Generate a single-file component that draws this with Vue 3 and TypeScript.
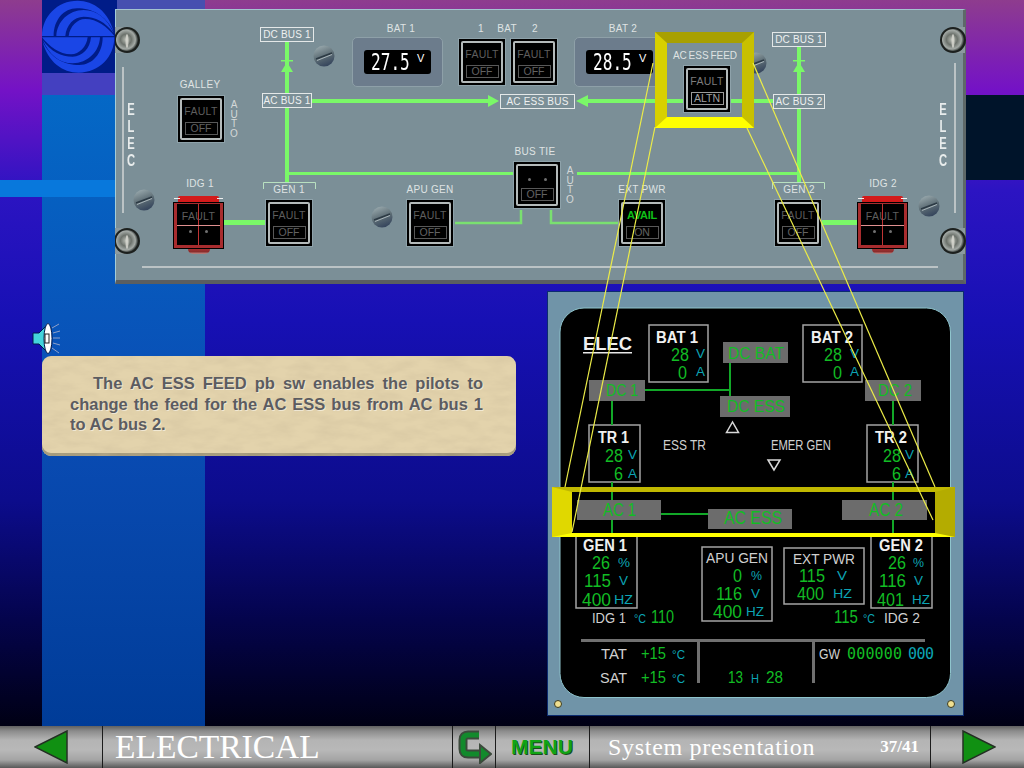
<script setup lang="ts">
interface Pb {
  x: number;
  y: number;
  top?: string;
  box: string;
  dots?: boolean;
  lit?: boolean;
  avail?: boolean;
}

interface Label {
  x: number;
  y: number;
  w: number;
  text: string;
  cls?: string;
}

interface Txt {
  t: string;
  x: number;
  y: number;
  w: number;
  s: number;
  c: string;
}

// panel coords are page coords minus the panel's padding box origin
const PX = 116;
const PY = 10;

const at = (x: number, y: number, w?: number) => ({
  left: `${x - PX}px`,
  top: `${y - PY}px`,
  width: w === undefined ? undefined : `${w}px`
});

const pbs: Pb[] = [
  { x: 177, y: 95, top: 'FAULT', box: 'OFF' },
  { x: 265, y: 199, top: 'FAULT', box: 'OFF' },
  { x: 406, y: 199, top: 'FAULT', box: 'OFF' },
  { x: 458, y: 38, top: 'FAULT', box: 'OFF' },
  { x: 510, y: 38, top: 'FAULT', box: 'OFF' },
  { x: 513, y: 161, box: 'OFF', dots: true },
  { x: 618, y: 199, top: 'AVAIL', box: 'ON', avail: true },
  { x: 683, y: 65, top: 'FAULT', box: 'ALTN', lit: true },
  { x: 774, y: 199, top: 'FAULT', box: 'OFF' }
];

const guards = [{ x: 174 }, { x: 858 }];

const labels: Label[] = [
  { x: 160, y: 79, w: 80, text: 'GALLEY' },
  { x: 160, y: 178, w: 80, text: 'IDG 1' },
  { x: 843, y: 178, w: 80, text: 'IDG 2' },
  { x: 249, y: 184, w: 80, text: 'GEN 1' },
  { x: 759, y: 184, w: 80, text: 'GEN 2' },
  { x: 390, y: 184, w: 80, text: 'APU GEN' },
  { x: 602, y: 184, w: 80, text: 'EXT PWR' },
  { x: 495, y: 146, w: 80, text: 'BUS TIE' },
  { x: 361, y: 23, w: 80, text: 'BAT 1' },
  { x: 583, y: 23, w: 80, text: 'BAT 2' },
  { x: 471, y: 23, w: 20, text: '1' },
  { x: 487, y: 23, w: 40, text: 'BAT' },
  { x: 525, y: 23, w: 20, text: '2' },
  { x: 665, y: 50, w: 80, text: 'AC ESS FEED', cls: 'tight' }
];

const busBoxes: Label[] = [
  { x: 260, y: 27, w: 54, text: 'DC BUS 1' },
  { x: 262, y: 93, w: 50, text: 'AC BUS 1' },
  { x: 500, y: 94, w: 75, text: 'AC ESS BUS' },
  { x: 772, y: 32, w: 54, text: 'DC BUS 1' },
  { x: 773, y: 94, w: 52, text: 'AC BUS 2' }
];

const lcds = [
  { x: 352, value: '27.5' },
  { x: 574, value: '28.5' }
];

const autos = [
  { x: 227, y: 100 },
  { x: 563, y: 166 }
];

const bigScrews = [
  [127, 40],
  [127, 241],
  [953, 40],
  [953, 241]
];

const smallScrews = [
  [144, 200],
  [324, 56],
  [382, 217],
  [756, 63],
  [929, 206]
];

const ecamBoxes = [
  [649, 325, 59, 57],
  [803, 325, 59, 57],
  [589, 425, 51, 57],
  [867, 425, 51, 57],
  [576, 534, 61, 74],
  [871, 534, 61, 74],
  [702, 547, 70, 74],
  [784, 548, 80, 56]
];

const busBars = [
  { x: 723, y: 342, w: 65, h: 21, t: 'DC BAT', tx: 728, tw: 56, ty: 359, s: 17 },
  { x: 589, y: 380, w: 56, h: 21, t: 'DC 1', tx: 606, tw: 32, ty: 396, s: 17 },
  { x: 865, y: 380, w: 56, h: 21, t: 'DC 2', tx: 878, tw: 34, ty: 396, s: 17 },
  { x: 720, y: 396, w: 70, h: 21, t: 'DC ESS', tx: 727, tw: 58, ty: 412, s: 17 },
  { x: 577, y: 500, w: 84, h: 20, t: 'AC 1', tx: 603, tw: 33, ty: 516, s: 18 },
  { x: 842, y: 500, w: 85, h: 20, t: 'AC 2', tx: 869, tw: 34, ty: 516, s: 18 },
  { x: 708, y: 509, w: 84, h: 20, t: 'AC ESS', tx: 724, tw: 58, ty: 524, s: 18 }
];

const ecamLines = [
  [645, 390, 730, 390],
  [730, 363, 730, 396],
  [612, 401, 612, 425],
  [612, 482, 612, 500],
  [612, 520, 612, 537],
  [893, 401, 893, 425],
  [893, 482, 893, 500],
  [893, 520, 893, 537],
  [661, 514, 708, 514]
];

const ecamTexts: Txt[] = [
  { t: 'BAT 1', x: 656, y: 343, w: 42, s: 16, c: 'wb' },
  { t: '28', x: 671, y: 361, w: 18, s: 18, c: 'g' },
  { t: 'V', x: 696, y: 358, w: 9, s: 13, c: 'c' },
  { t: '0', x: 678, y: 379, w: 9, s: 18, c: 'g' },
  { t: 'A', x: 696, y: 376, w: 9, s: 13, c: 'c' },
  { t: 'BAT 2', x: 811, y: 343, w: 42, s: 16, c: 'wb' },
  { t: '28', x: 824, y: 361, w: 18, s: 18, c: 'g' },
  { t: 'V', x: 850, y: 358, w: 9, s: 13, c: 'c' },
  { t: '0', x: 833, y: 379, w: 9, s: 18, c: 'g' },
  { t: 'A', x: 850, y: 376, w: 9, s: 13, c: 'c' },
  { t: 'TR 1', x: 598, y: 443, w: 31, s: 16, c: 'wb' },
  { t: '28', x: 605, y: 462, w: 18, s: 18, c: 'g' },
  { t: 'V', x: 628, y: 459, w: 9, s: 13, c: 'c' },
  { t: '6', x: 614, y: 480, w: 9, s: 18, c: 'g' },
  { t: 'A', x: 628, y: 478, w: 9, s: 13, c: 'c' },
  { t: 'TR 2', x: 875, y: 443, w: 32, s: 16, c: 'wb' },
  { t: '28', x: 883, y: 462, w: 18, s: 18, c: 'g' },
  { t: 'V', x: 905, y: 459, w: 9, s: 13, c: 'c' },
  { t: '6', x: 892, y: 480, w: 9, s: 18, c: 'g' },
  { t: 'A', x: 905, y: 478, w: 9, s: 13, c: 'c' },
  { t: 'ESS TR', x: 663, y: 450, w: 43, s: 14, c: 'w' },
  { t: 'EMER GEN', x: 771, y: 450, w: 60, s: 14, c: 'w' },
  { t: 'GEN 1', x: 583, y: 551, w: 44, s: 16, c: 'wb' },
  { t: '26', x: 592, y: 569, w: 18, s: 18, c: 'g' },
  { t: '%', x: 618, y: 567, w: 12, s: 13, c: 'c' },
  { t: '115', x: 584, y: 587, w: 27, s: 18, c: 'g' },
  { t: 'V', x: 619, y: 585, w: 9, s: 13, c: 'c' },
  { t: '400', x: 582, y: 606, w: 29, s: 18, c: 'g' },
  { t: 'HZ', x: 614, y: 604, w: 19, s: 13, c: 'c' },
  { t: 'APU GEN', x: 706, y: 563, w: 62, s: 15, c: 'w' },
  { t: '0', x: 733, y: 582, w: 9, s: 18, c: 'g' },
  { t: '%', x: 751, y: 580, w: 11, s: 13, c: 'c' },
  { t: '116', x: 716, y: 600, w: 26, s: 18, c: 'g' },
  { t: 'V', x: 751, y: 598, w: 9, s: 13, c: 'c' },
  { t: '400', x: 713, y: 618, w: 29, s: 18, c: 'g' },
  { t: 'HZ', x: 746, y: 616, w: 18, s: 13, c: 'c' },
  { t: 'EXT PWR', x: 793, y: 564, w: 62, s: 15, c: 'w' },
  { t: '115', x: 799, y: 582, w: 26, s: 18, c: 'g' },
  { t: 'V', x: 837, y: 580, w: 10, s: 13, c: 'c' },
  { t: '400', x: 797, y: 600, w: 27, s: 18, c: 'g' },
  { t: 'HZ', x: 833, y: 598, w: 19, s: 13, c: 'c' },
  { t: 'GEN 2', x: 879, y: 551, w: 44, s: 16, c: 'wb' },
  { t: '26', x: 888, y: 569, w: 18, s: 18, c: 'g' },
  { t: '%', x: 913, y: 567, w: 11, s: 13, c: 'c' },
  { t: '116', x: 879, y: 587, w: 27, s: 18, c: 'g' },
  { t: 'V', x: 914, y: 585, w: 9, s: 13, c: 'c' },
  { t: '401', x: 877, y: 606, w: 27, s: 18, c: 'g' },
  { t: 'HZ', x: 912, y: 604, w: 18, s: 13, c: 'c' },
  { t: 'IDG 1', x: 592, y: 623, w: 34, s: 15, c: 'w' },
  { t: '°C', x: 634, y: 623, w: 12, s: 12, c: 'c' },
  { t: '110', x: 651, y: 623, w: 23, s: 18, c: 'g' },
  { t: '115', x: 834, y: 623, w: 24, s: 18, c: 'g' },
  { t: '°C', x: 863, y: 623, w: 12, s: 12, c: 'c' },
  { t: 'IDG 2', x: 884, y: 623, w: 36, s: 15, c: 'w' },
  { t: 'TAT', x: 601, y: 659, w: 26, s: 15, c: 'w' },
  { t: '+15', x: 641, y: 659, w: 25, s: 17, c: 'g' },
  { t: '°C', x: 672, y: 659, w: 13, s: 12, c: 'c' },
  { t: 'SAT', x: 600, y: 683, w: 27, s: 15, c: 'w' },
  { t: '+15', x: 641, y: 683, w: 25, s: 17, c: 'g' },
  { t: '°C', x: 672, y: 683, w: 13, s: 12, c: 'c' },
  { t: '13', x: 728, y: 683, w: 15, s: 17, c: 'g' },
  { t: 'H', x: 751, y: 683, w: 8, s: 13, c: 'c' },
  { t: '28', x: 766, y: 683, w: 17, s: 17, c: 'g' },
  { t: 'GW', x: 819, y: 659, w: 21, s: 14, c: 'w' }
];

const yellowLines = [
  [653, 63, 565, 487],
  [655, 127, 572, 532],
  [753, 63, 935, 487],
  [747, 128, 933, 520]
];
</script>

<template>
  <div class="page">
    <main class="slide">
      <div class="band band-column"></div>
      <div class="band band-step"></div>
      <div class="band band-top"></div>
      <div class="band band-cross"></div>
      <div class="band band-dark"></div>

      <svg class="logo" viewBox="0 0 225 219" width="75" height="73">
        <rect width="225" height="219" fill="#001c88" />
        <g id="swirl" fill="#1a46e6">
          <g>
            <path d="M0 108 C0 50 45 2 107 2 C155 2 200 35 215 95 C190 45 150 25 105 25 C65 25 35 60 35 108 Z" />
            <path d="M43 108 C45 65 80 30 125 30 C165 30 195 55 215 100 C190 65 160 50 125 50 C95 50 73 75 70 108 Z" />
            <path d="M80 108 C83 80 105 57 130 57 C165 57 195 80 217 108 Z" />
          </g>
          <g transform="rotate(180 108.5 110)">
            <path d="M0 108 C0 50 45 2 107 2 C155 2 200 35 215 95 C190 45 150 25 105 25 C65 25 35 60 35 108 Z" />
            <path d="M43 108 C45 65 80 30 125 30 C165 30 195 55 215 100 C190 65 160 50 125 50 C95 50 73 75 70 108 Z" />
            <path d="M80 108 C83 80 105 57 130 57 C165 57 195 80 217 108 Z" />
          </g>
        </g>
      </svg>

      <section class="panel">
        <svg class="panel-art" viewBox="115 9 851 275" width="851" height="275">
          <defs>
            <radialGradient id="bigScrew" cx="45%" cy="48%" r="55%">
              <stop offset="0" stop-color="#b8bcb4" />
              <stop offset="0.45" stop-color="#6c726c" />
              <stop offset="0.78" stop-color="#a4aaa6" />
              <stop offset="1" stop-color="#2c3230" />
            </radialGradient>
            <linearGradient id="smallScrew" x1="0.2" y1="0" x2="0.6" y2="1">
              <stop offset="0" stop-color="#9cacb0" />
              <stop offset="0.55" stop-color="#5c6c74" />
              <stop offset="1" stop-color="#34445c" />
            </linearGradient>
          </defs>

          <g fill="#7af868">
            <rect x="285" y="41" width="4" height="142" />
            <rect x="797" y="45" width="4" height="138" />
            <rect x="312" y="99" width="180" height="4" />
            <rect x="586" y="99" width="187" height="4" />
            <rect x="289" y="172" width="224" height="3" />
            <rect x="577" y="172" width="220" height="3" />
            <rect x="223" y="220" width="42" height="5" />
            <rect x="822" y="220" width="36" height="5" />
            <polygon points="281,72 287,62 293,72" />
            <rect x="281" y="60" width="12" height="1.5" />
            <polygon points="793,72 799,62 805,72" />
            <rect x="793" y="60" width="12" height="1.5" />
            <polygon points="499,101 488,95 488,107" />
            <polygon points="576,101 588,95 588,107" />
          </g>
          <g fill="none" stroke="#7ae070" stroke-width="2.5">
            <path d="M455 223 H521 V210" />
            <path d="M551 210 V223 H618" />
          </g>
          <g fill="none" stroke="#b8e0c0" stroke-width="1">
            <path d="M263.5 189 V182.5 H315.5 V189" />
            <path d="M772.5 189 V182.5 H824.5 V189" />
          </g>

          <g stroke="#d0d4d4" stroke-width="1.5">
            <line x1="123" y1="67" x2="123" y2="213" />
            <line x1="955" y1="63" x2="955" y2="213" />
            <line x1="142" y1="267" x2="938" y2="267" />
          </g>

          <g v-for="(s, i) in bigScrews" :key="'b' + i">
            <rect
              :x="s[0] < 500 ? s[0] - 12 : s[0]"
              :y="s[1] - 13"
              width="12"
              height="26"
              fill="#8c9a9e"
            />
            <circle :cx="s[0]" :cy="s[1]" r="13" fill="#1c201e" />
            <circle :cx="s[0]" :cy="s[1]" r="11" fill="url(#bigScrew)" />
            <ellipse :cx="s[0]" :cy="s[1] + 1" rx="1.5" ry="7" fill="#dcdcd4" opacity="0.8" />
          </g>
          <g v-for="(s, i) in smallScrews" :key="'s' + i">
            <circle :cx="s[0]" :cy="s[1]" r="10.5" fill="url(#smallScrew)" />
            <line
              :x1="s[0] - 8"
              :y1="s[1] + 3"
              :x2="s[0] + 8"
              :y2="s[1] - 3"
              stroke="#2c3a44"
              stroke-width="1.5"
            />
            <line
              :x1="s[0] - 7"
              :y1="s[1] + 4.5"
              :x2="s[0] + 8"
              :y2="s[1] - 1.5"
              stroke="#a8b4b8"
              stroke-width="1"
            />
          </g>
        </svg>

        <div class="elec" :style="at(124, 101)">
          <span>E</span><span>L</span><span>E</span><span>C</span>
        </div>
        <div class="elec" :style="at(936, 101)">
          <span>E</span><span>L</span><span>E</span><span>C</span>
        </div>

        <div v-for="a in autos" :key="a.x" class="auto" :style="at(a.x, a.y)">
          <span>A</span><span>U</span><span>T</span><span>O</span>
        </div>

        <div
          v-for="l in labels"
          :key="l.x + l.text"
          class="plate-label"
          :class="l.cls"
          :style="at(l.x, l.y, l.w)"
        >
          {{ l.text }}
        </div>

        <div v-for="b in busBoxes" :key="b.x + b.text" class="bus-box" :style="at(b.x, b.y, b.w)">
          {{ b.text }}
        </div>

        <div v-for="d in lcds" :key="d.x" class="bat-plate" :style="at(d.x, 37)">
          <div class="lcd">
            <span class="lcd-value">{{ d.value }}</span>
            <span class="lcd-unit">V</span>
          </div>
        </div>

        <div v-for="p in pbs" :key="p.x" class="pb" :class="{ lit: p.lit }" :style="at(p.x, p.y)">
          <div class="pb-inner">
            <div v-if="p.dots" class="pb-dots"><i></i><i></i></div>
            <div v-else class="pb-top" :class="{ avail: p.avail }">{{ p.top }}</div>
            <div class="pb-box">{{ p.box }}</div>
          </div>
        </div>

        <div v-for="g in guards" :key="g.x" class="guard" :style="at(g.x, 196)">
          <div class="guard-lid"></div>
          <div class="guard-body">
            <div class="pb-top">FAULT</div>
            <div class="pb-dots"><i></i><i></i></div>
            <span class="guard-v"></span>
            <span class="guard-h"></span>
          </div>
          <div class="guard-tab"></div>
          <span class="guard-pin pin-left"></span>
          <span class="guard-pin pin-right"></span>
        </div>

        <div class="frame" :style="at(655, 32)"></div>
      </section>

      <div class="lower">
        <div class="note-col">
          <svg class="speaker" viewBox="0 0 30 34" width="30" height="34">
            <g stroke="#8fa0c8" stroke-width="1">
              <line x1="20" y1="6" x2="27" y2="2" />
              <line x1="21" y1="11" x2="28" y2="9" />
              <line x1="21" y1="16" x2="28" y2="16" />
              <line x1="21" y1="21" x2="28" y2="23" />
              <line x1="20" y1="26" x2="27" y2="31" />
            </g>
            <polygon points="1,11 7,11 16,2 16,31 7,22 1,22" fill="#44d4dc" stroke="#00184c" />
            <ellipse cx="16" cy="16.5" rx="4" ry="15" fill="#fff" stroke="#00184c" />
            <rect x="13" y="12" width="4" height="9" fill="none" stroke="#222" />
          </svg>

          <div class="note">
            <svg class="note-grain" width="474" height="100">
              <filter id="grain">
                <feTurbulence type="fractalNoise" baseFrequency="0.04 0.11" numOctaves="4" seed="7" />
                <feColorMatrix
                  values="0 0 0 0 0.6  0 0 0 0 0.5  0 0 0 0 0.32  0.7 0 0 0 -0.24"
                />
              </filter>
              <rect width="474" height="97" filter="url(#grain)" />
            </svg>
            <p class="note-text">
              The AC ESS FEED pb sw enables the pilots to change the feed for the AC ESS bus from AC bus 1 to AC bus 2.
            </p>
          </div>
        </div>

        <section class="ecam">
          <svg viewBox="547 291 417 425" width="417" height="425">
            <rect x="560" y="308" width="390.5" height="389.5" rx="24" fill="#000" stroke="#8fc4cc" stroke-width="1" />
            <circle cx="558" cy="704" r="3.5" fill="#f0e090" stroke="#3a3a20" />
            <circle cx="951" cy="704" r="3.5" fill="#f0e090" stroke="#3a3a20" />

            <rect
              v-for="(b, i) in ecamBoxes"
              :key="'eb' + i"
              :x="b[0]"
              :y="b[1]"
              :width="b[2]"
              :height="b[3]"
              fill="none"
              stroke="#a4a4a4"
              stroke-width="1.5"
            />

            <line
              v-for="(l, i) in ecamLines"
              :key="'el' + i"
              :x1="l[0]"
              :y1="l[1]"
              :x2="l[2]"
              :y2="l[3]"
              stroke="#12a828"
              stroke-width="2"
            />

            <g v-for="b in busBars" :key="b.t">
              <rect :x="b.x" :y="b.y" :width="b.w" :height="b.h" fill="#6c6c6c" />
              <text
                class="g"
                :x="b.tx"
                :y="b.ty"
                :font-size="b.s"
                :textLength="b.tw"
                lengthAdjust="spacingAndGlyphs"
              >{{ b.t }}</text>
            </g>

            <text class="wb" x="583" y="350" font-size="19" textLength="49" lengthAdjust="spacingAndGlyphs">ELEC</text>
            <rect x="583" y="352" width="49" height="1.5" fill="#e8e8e8" />

            <polygon points="732.5,422 726.5,432.5 738.5,432.5" fill="none" stroke="#d8d8d8" stroke-width="1.5" />
            <polygon points="774,470 768,460 780,460" fill="none" stroke="#d8d8d8" stroke-width="1.5" />

            <text
              v-for="(t, i) in ecamTexts"
              :key="'et' + i"
              :class="t.c"
              :x="t.x"
              :y="t.y"
              :font-size="t.s"
              :textLength="t.w"
              lengthAdjust="spacingAndGlyphs"
            >{{ t.t }}</text>

            <g fill="#707070">
              <rect x="581" y="639" width="344" height="3" />
              <rect x="697" y="640" width="3" height="43" />
              <rect x="812" y="640" width="3" height="43" />
            </g>

            <text class="g mono" x="847" y="659" font-size="15" textLength="55" lengthAdjust="spacing">000000</text>
            <text class="c mono" x="908" y="659" font-size="15" textLength="26" lengthAdjust="spacing">000</text>
          </svg>
          <div class="band-frame"></div>
        </section>
      </div>

      <svg class="links" viewBox="0 0 1024 726" width="1024" height="726">
        <line
          v-for="(l, i) in yellowLines"
          :key="i"
          :x1="l[0]"
          :y1="l[1]"
          :x2="l[2]"
          :y2="l[3]"
          stroke="#ecec48"
          stroke-width="1.2"
        />
      </svg>
    </main>

    <nav class="nav">
      <div class="cell cell-back">
        <svg viewBox="0 0 34 34" width="34" height="34">
          <polygon points="1,17 33,1 33,33" fill="#109012" stroke="#243024" stroke-width="1.5" />
        </svg>
      </div>
      <div class="cell cell-chapter">ELECTRICAL</div>
      <div class="cell cell-return">
        <svg viewBox="0 0 34 34" width="34" height="34">
          <path d="M21 5 H10 Q5 5 5 10 V19 Q5 24 10 24 H24" fill="none" stroke="#3c4a3c" stroke-width="9" />
          <path d="M21 5 H10 Q5 5 5 10 V19 Q5 24 10 24 H24" fill="none" stroke="#128a2c" stroke-width="5" />
          <polygon points="22,15 33,24 22,33" fill="#128a2c" stroke="#3c4a3c" stroke-width="2" />
        </svg>
      </div>
      <div class="cell cell-menu">MENU</div>
      <div class="cell cell-topic">
        <span>System presentation</span>
        <span class="count">37/41</span>
      </div>
      <div class="cell cell-next">
        <svg viewBox="0 0 34 34" width="34" height="34">
          <polygon points="33,17 1,1 1,33" fill="#109012" stroke="#243024" stroke-width="1.5" />
        </svg>
      </div>
    </nav>
  </div>
</template>

<style>
html,
body {
  margin: 0;
  background: #000;
}
</style>

<style scoped>
.page {
  display: flex;
  flex-direction: column;
  width: 1024px;
  height: 768px;
  overflow: hidden;
  font-family: 'Liberation Sans', Arial, sans-serif;
}

.slide {
  position: relative;
  flex: 1;
  padding-top: 9px;
  overflow: hidden;
  background: linear-gradient(
    180deg,
    #8e3c8e 0,
    #7412c6 90px,
    #2c14c2 190px,
    #1710b4 320px,
    #0c0c8c 500px,
    #04044c 620px,
    #000014 726px
  );
}

/* the flat colour bands of the slide master */
.band {
  position: absolute;
}

.band-column {
  left: 42px;
  top: 95px;
  width: 163px;
  height: 631px;
  background: linear-gradient(180deg, #0468c6 0, #0a4cb4 330px, #003c98 631px);
}

.band-step {
  left: 42px;
  top: 73px;
  width: 163px;
  height: 22px;
  background: #4440c0;
}

.band-top {
  left: 117px;
  top: 0;
  width: 88px;
  height: 73px;
  background: #4650b0;
}

.band-cross {
  left: 0;
  top: 180px;
  width: 205px;
  height: 17px;
  background: #0878dc;
}

.band-dark {
  left: 966px;
  top: 95px;
  width: 58px;
  height: 85px;
  background: #00142a;
}

.logo {
  position: absolute;
  left: 42px;
  top: 0;
}

.panel {
  position: relative;
  box-sizing: border-box;
  width: 851px;
  height: 275px;
  margin-left: 115px;
  background: #7b8f97;
  border-top: 1px solid #a4c4d0;
  border-left: 1px solid #a4ccd8;
  border-right: 3px solid #5e6868;
  border-bottom: 4px solid #5a5e60;
}

.panel-art {
  position: absolute;
  left: -1px;
  top: -1px;
}

.elec,
.auto {
  position: absolute;
  display: flex;
  flex-direction: column;
  align-items: center;
  width: 14px;
  color: #e8ecec;
}

.elec {
  font-size: 16px;
  font-weight: 700;
  line-height: 17px;
  transform: scaleX(0.7);
}

.auto {
  font-size: 10px;
  line-height: 9.5px;
  color: #d4d8d8;
}

.plate-label {
  position: absolute;
  height: 12px;
  font-size: 10px;
  line-height: 12px;
  letter-spacing: 0.3px;
  text-align: center;
  color: #dfe3e3;
}

.plate-label.tight {
  letter-spacing: 0;
  word-spacing: -1px;
}

.bus-box {
  position: absolute;
  box-sizing: border-box;
  height: 15px;
  border: 1px solid #e4e8e8;
  background: #7b8f97;
  font-size: 10px;
  line-height: 13px;
  letter-spacing: 0.2px;
  white-space: nowrap;
  text-align: center;
  color: #eef0f0;
}

.bat-plate {
  position: absolute;
  box-sizing: border-box;
  display: flex;
  justify-content: center;
  align-items: center;
  width: 91px;
  height: 50px;
  background: #6c7c8c;
  border: 1px solid #8ea0a8;
  border-radius: 5px;
}

.lcd {
  display: flex;
  align-items: flex-start;
  gap: 6px;
  box-sizing: border-box;
  width: 67px;
  height: 24px;
  padding-left: 7px;
  background: #000;
  border-radius: 3px;
  color: #fff;
}

.lcd-value {
  display: block;
  width: 40px;
  font-family: 'DejaVu Sans Mono', monospace;
  font-size: 23px;
  line-height: 24px;
  white-space: nowrap;
  transform: scaleX(0.7);
  transform-origin: left center;
}

.lcd-unit {
  font-size: 11px;
  line-height: 16px;
}

.pb {
  position: absolute;
  box-sizing: border-box;
  width: 48px;
  height: 48px;
  padding: 3px;
  background: #000;
  outline: 1px solid #8ea2aa;
  outline-offset: -1px;
}

.pb-inner {
  display: flex;
  flex-direction: column;
  align-items: center;
  justify-content: flex-end;
  box-sizing: border-box;
  height: 100%;
  padding-bottom: 3px;
  border: 2px solid #b4baba;
  border-radius: 2px;
}

.pb-top {
  font-size: 10.5px;
  line-height: 13px;
  letter-spacing: 0.3px;
  color: #5e5e5e;
  margin-bottom: 4px;
}

.pb-top.avail {
  font-size: 11px;
  font-weight: 700;
  letter-spacing: -0.3px;
  color: #10c018;
}

.pb-box {
  box-sizing: border-box;
  width: 33px;
  height: 13px;
  border: 1px solid #585858;
  font-size: 10.5px;
  line-height: 11px;
  text-align: center;
  color: #626262;
}

.lit .pb-top {
  color: #7c7c7c;
}

.lit .pb-box {
  border-color: #9a9a9a;
  color: #a0a0a0;
}

.pb-dots {
  display: flex;
  gap: 13px;
  margin-bottom: 7px;
}

.pb-dots i {
  width: 3px;
  height: 3px;
  border-radius: 50%;
  background: #707070;
}

.guard {
  position: absolute;
  width: 49px;
  height: 58px;
}

.guard-lid {
  height: 7px;
  margin: 0 4px;
  background: #d41a1a;
  border-radius: 2px 2px 0 0;
}

.guard-body {
  position: relative;
  box-sizing: border-box;
  display: flex;
  flex-direction: column;
  align-items: center;
  height: 45px;
  padding-top: 6px;
  background: #000;
  border: 3px solid #a82c2e;
  border-top-width: 1px;
  outline: 1px solid #000;
}

.guard-body .pb-top {
  margin-bottom: 7px;
}

.guard-body .pb-dots {
  margin: 0;
}

.guard-v,
.guard-h {
  position: absolute;
  background: #c03434;
}

.guard-v {
  left: 21px;
  top: 0;
  width: 1px;
  height: 100%;
}

.guard-h {
  left: 0;
  top: 21px;
  width: 100%;
  height: 1px;
  background: #e09090;
}

.guard-tab {
  width: 22px;
  height: 6px;
  margin: 0 auto;
  background: linear-gradient(180deg, #b03030, #8a2c2c 60%, #c08c88);
  border-radius: 0 0 5px 5px;
}

.guard-pin {
  position: absolute;
  top: 2px;
  width: 6px;
  height: 1px;
  background: #f0f0f0;
}

.pin-left {
  left: 0;
}

.pin-right {
  right: 0;
}

.frame {
  position: absolute;
  box-sizing: border-box;
  width: 99px;
  height: 96px;
  border-style: solid;
  border-width: 11px 12px;
  border-color: #a8a000 #c8c000 #ffff00 #d8d000;
}

.lower {
  display: flex;
  margin-top: 7px;
}

.note-col {
  width: 547px;
  box-sizing: border-box;
  padding-left: 32px;
  padding-top: 31px;
}

.speaker {
  position: relative;
  display: block;
}

.note {
  position: relative;
  box-sizing: border-box;
  width: 474px;
  height: 100px;
  margin-left: 10px;
  padding: 17px 33px 0 28px;
  overflow: hidden;
  border-radius: 9px;
  background: #e3d3ac;
  box-shadow: inset 0 -3px 0 #a49a7c;
}

.note-grain {
  position: absolute;
  left: 0;
  top: 0;
}

.note-text {
  position: relative;
  margin: 0;
  font-size: 16.5px;
  font-weight: 700;
  line-height: 20.5px;
  text-align: justify;
  text-indent: 23px;
  color: #5c5c60;
  text-shadow: 1px 1px 0 rgba(255, 255, 255, 0.5);
}

.ecam {
  position: relative;
  box-sizing: border-box;
  width: 417px;
  height: 425px;
  background: #7094a8;
  outline: 1px solid #0c2c70;
  outline-offset: -1px;
}

.ecam svg {
  display: block;
}

.ecam text {
  font-family: 'Liberation Sans', Arial, sans-serif;
}

.ecam .g {
  fill: #12bc24;
}

.ecam .c {
  fill: #0ca4b4;
}

.ecam .w {
  fill: #d0d0d0;
}

.ecam .wb {
  fill: #f0f0f0;
  font-weight: 700;
}

.ecam .mono {
  font-family: 'DejaVu Sans Mono', monospace;
}

.band-frame {
  position: absolute;
  left: 5px;
  top: 196px;
  box-sizing: border-box;
  width: 403px;
  height: 50px;
  border-style: solid;
  border-width: 5px 20px 4px;
  border-color: #c0b800 #b4ac00 #ffff00 #e0d800;
}

.links {
  position: absolute;
  left: 0;
  top: 0;
  pointer-events: none;
}

.nav {
  display: flex;
  height: 42px;
  background: linear-gradient(
    180deg,
    #606060 0,
    #8c8c8c 5px,
    #b4b4b4 14px,
    #b8b8b8 24px,
    #a4a4a4 34px,
    #585858 42px
  );
  font-family: 'Liberation Serif', 'Times New Roman', serif;
  color: #fff;
}

.cell {
  display: flex;
  align-items: center;
  box-sizing: border-box;
  height: 100%;
  border-right: 1px solid #1c1c1c;
}

.cell-back {
  width: 103px;
  padding-left: 34px;
}

.cell-chapter {
  width: 350px;
  padding-left: 12px;
  font-size: 33.5px;
}

.cell-return {
  width: 43px;
  padding-left: 5px;
}

.cell-menu {
  width: 94px;
  padding-left: 15px;
  font-family: 'Liberation Sans', Arial, sans-serif;
  font-size: 21px;
  font-weight: 700;
  color: #10a414;
  text-shadow: 1px 1px 0 #1c4c1c;
}

.cell-topic {
  justify-content: space-between;
  width: 341px;
  padding: 0 11px 0 18px;
  font-size: 24px;
  letter-spacing: 0.7px;
}

.count {
  font-size: 17px;
  font-weight: 700;
  letter-spacing: 0;
}

.cell-next {
  flex: 1;
  padding-left: 31px;
  border-right: 0;
}
</style>
